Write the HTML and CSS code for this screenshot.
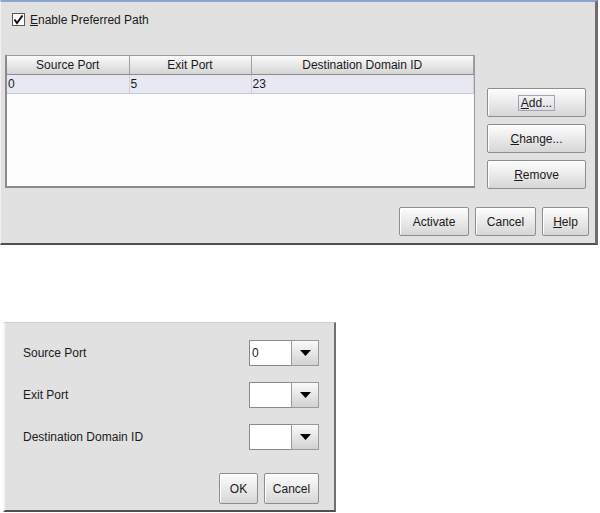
FILE: index.html
```html
<!DOCTYPE html>
<html>
<head>
    <title>Preferred Path</title>
    <link rel="stylesheet" href="styles.css">
</head>
<body>

<div class="panel main-panel">
    <div class="check-row">
        <span class="checkbox">
            <svg width="11" height="11" viewBox="0 0 11 11"><path d="M1.5 5.5 L4 9 L9.5 1.5" fill="none" stroke="#111" stroke-width="2"/></svg>
        </span>
        <span><u>E</u>nable Preferred Path</span>
    </div>

    <div class="table-row">
        <div class="table-box">
            <table>
                <thead>
                    <tr>
                        <th class="col-src">Source Port</th>
                        <th class="col-exit">Exit Port</th>
                        <th>Destination Domain ID</th>
                    </tr>
                </thead>
                <tbody>
                    <tr class="selected">
                        <td>0</td>
                        <td>5</td>
                        <td>23</td>
                    </tr>
                </tbody>
            </table>
        </div>
        <div class="side-buttons">
            <button class="btn"><span class="focus"><u>A</u>dd...</span></button>
            <button class="btn"><u>C</u>hange...</button>
            <button class="btn"><u>R</u>emove</button>
        </div>
    </div>

    <div class="footer">
        <button class="btn btn-activate">Activate</button>
        <button class="btn btn-cancel">Cancel</button>
        <button class="btn btn-help"><u>H</u>elp</button>
    </div>
</div>

<div class="panel dialog">
    <div class="field-row">
        <span class="field-label">Source Port</span>
        <div class="combo">
            <span class="combo-text">0</span>
            <span class="combo-arrow"><svg width="11" height="6" viewBox="0 0 11 6"><polygon points="0,0 11,0 5.5,6" fill="#000"/></svg></span>
        </div>
    </div>
    <div class="field-row">
        <span class="field-label">Exit Port</span>
        <div class="combo">
            <span class="combo-text"></span>
            <span class="combo-arrow"><svg width="11" height="6" viewBox="0 0 11 6"><polygon points="0,0 11,0 5.5,6" fill="#000"/></svg></span>
        </div>
    </div>
    <div class="field-row">
        <span class="field-label">Destination Domain ID</span>
        <div class="combo">
            <span class="combo-text"></span>
            <span class="combo-arrow"><svg width="11" height="6" viewBox="0 0 11 6"><polygon points="0,0 11,0 5.5,6" fill="#000"/></svg></span>
        </div>
    </div>
    <div class="dialog-footer">
        <button class="btn btn-ok">OK</button>
        <button class="btn btn-dcancel">Cancel</button>
    </div>
</div>

</body>
</html>
```

FILE: styles.css
```css
body {
    font-family: "Liberation Sans", Arial, sans-serif;
    font-size: 12px;
    color: #1a1a1a;
    margin: 0;
    padding: 0;
    background-color: #fff;
}
.panel {
    box-sizing: border-box;
    background-color: #e1e1e1;
}
.main-panel {
    width: 598px;
    height: 245px;
    border-top: 2px solid #8aa5d4;
    border-left: 1px solid #f2f2f2;
    border-right: 3px solid #6e6e6e;
    border-bottom: 2px solid #505050;
    padding: 11px 6px 0 4px;
}
.check-row {
    display: flex;
    align-items: center;
    gap: 5px;
    margin-left: 7px;
    height: 13px;
}
.checkbox {
    width: 11px;
    height: 11px;
    border: 1px solid #5a5a5a;
    background-color: #fff;
    display: flex;
}
.table-row {
    display: flex;
    margin-top: 29px;
    gap: 12px;
}
.table-box {
    box-sizing: border-box;
    width: 470px;
    height: 133px;
    background-color: #fcfdfc;
    border: 1px solid #999;
    border-left: 2px solid #8a8a8a;
    border-bottom: 2px solid #8a8a8a;
}
table {
    width: 100%;
    border-collapse: collapse;
    table-layout: fixed;
}
th {
    height: 18px;
    padding: 0;
    font-weight: normal;
    text-align: center;
    background: linear-gradient(#fafafa, #e4e4e4 60%, #d4d4d4);
    border-right: 1px solid #a0a0a0;
    border-bottom: 1px solid #8c8c8c;
    box-sizing: border-box;
}
.col-src, .col-exit {
    width: 122px;
}
td {
    height: 18px;
    padding: 0 1px;
    border-right: 1px solid #cfcfd8;
    border-bottom: 1px solid #c8c8d2;
}
.selected td {
    background-color: #e8e8f3;
}
.btn {
    font-family: "Liberation Sans", Arial, sans-serif;
    font-size: 12px;
    color: #1a1a1a;
    height: 29px;
    padding: 0;
    border: 1px solid #8e8e8e;
    border-radius: 2px;
    background: linear-gradient(#fdfdfd, #eaeaea 50%, #d6d6d6);
    box-shadow: inset 1px 1px 0 #fff;
    cursor: pointer;
}
.side-buttons {
    display: flex;
    flex-direction: column;
    gap: 7px;
    padding-top: 33px;
}
.side-buttons .btn {
    width: 99px;
}
.focus {
    border: 1px solid #9ea3b8;
    padding: 0 2px;
}
.footer {
    display: flex;
    justify-content: flex-end;
    gap: 6px;
    margin-top: 18px;
}
.btn-activate {
    width: 70px;
}
.btn-cancel {
    width: 61px;
}
.btn-help {
    width: 47px;
}
.dialog {
    width: 333px;
    height: 190px;
    margin-top: 77px;
    margin-left: 3px;
    border-top: 1px solid #cfcfcf;
    border-left: 2px solid #f4f4f4;
    border-right: 2px solid #707070;
    border-bottom: 2px solid #505050;
    padding: 17px 15px 0 18px;
}
.field-row {
    display: flex;
    justify-content: space-between;
    align-items: center;
    height: 26px;
    margin-bottom: 16px;
}
.combo {
    display: flex;
    width: 70px;
    height: 26px;
}
.combo-text {
    box-sizing: border-box;
    width: 42px;
    background-color: #fff;
    border: 1px solid #8a8a8a;
    border-right: none;
    padding-left: 2px;
    line-height: 24px;
}
.combo-arrow {
    box-sizing: border-box;
    width: 28px;
    display: flex;
    align-items: center;
    justify-content: center;
    border: 1px solid #9a9a9a;
    background: linear-gradient(#fafafa, #e6e6e6 50%, #d2d2d2);
}
.dialog-footer {
    display: flex;
    justify-content: flex-end;
    gap: 6px;
    margin-top: 23px;
}
.btn-ok {
    width: 39px;
    height: 31px;
}
.btn-dcancel {
    width: 55px;
    height: 31px;
}
```
